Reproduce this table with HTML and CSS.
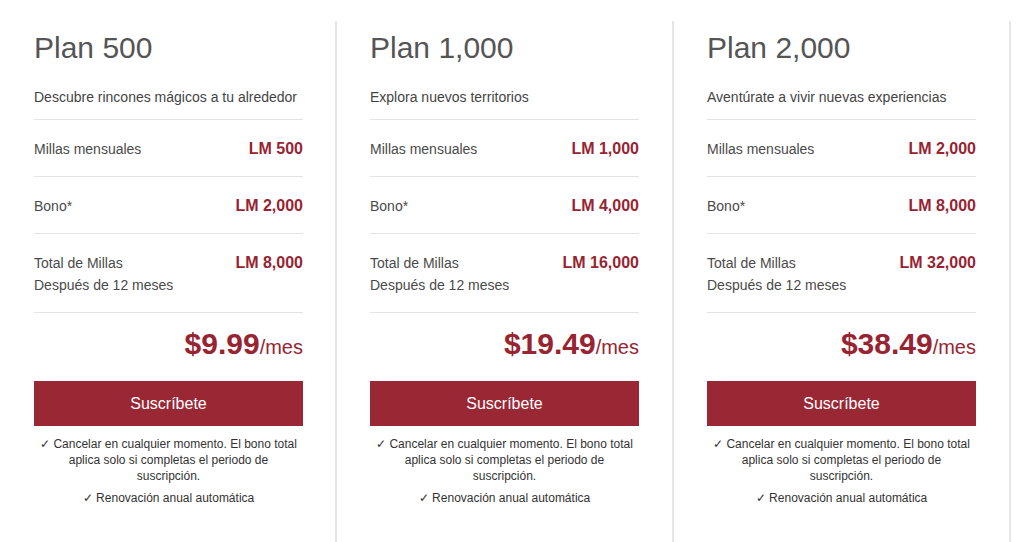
FILE: index.html
```html
<!DOCTYPE html>
<html lang="es">
<head>
<meta charset="utf-8">
<title>Planes</title>
<link rel="stylesheet" href="styles.css">
</head>
<body>
<div class="plans">
  <section class="plan">
    <h2 class="plan-title">Plan 500</h2>
    <p class="plan-desc">Descubre rincones mágicos a tu alrededor</p>
    <div class="row"><span class="label">Millas mensuales</span><span class="value">LM 500</span></div>
    <div class="row"><span class="label">Bono*</span><span class="value">LM 2,000</span></div>
    <div class="row"><span class="label">Total de Millas<br>Después de 12 meses</span><span class="value">LM 8,000</span></div>
    <div class="price"><span class="amount">$9.99</span><span class="per">/mes</span></div>
    <div class="btn">Suscríbete</div>
    <p class="note">✓ Cancelar en cualquier momento. El bono total aplica solo si completas el periodo de suscripción.</p>
    <p class="note">✓ Renovación anual automática</p>
  </section>
  <section class="plan">
    <h2 class="plan-title">Plan 1,000</h2>
    <p class="plan-desc">Explora nuevos territorios</p>
    <div class="row"><span class="label">Millas mensuales</span><span class="value">LM 1,000</span></div>
    <div class="row"><span class="label">Bono*</span><span class="value">LM 4,000</span></div>
    <div class="row"><span class="label">Total de Millas<br>Después de 12 meses</span><span class="value">LM 16,000</span></div>
    <div class="price"><span class="amount">$19.49</span><span class="per">/mes</span></div>
    <div class="btn">Suscríbete</div>
    <p class="note">✓ Cancelar en cualquier momento. El bono total aplica solo si completas el periodo de suscripción.</p>
    <p class="note">✓ Renovación anual automática</p>
  </section>
  <section class="plan">
    <h2 class="plan-title">Plan 2,000</h2>
    <p class="plan-desc">Aventúrate a vivir nuevas experiencias</p>
    <div class="row"><span class="label">Millas mensuales</span><span class="value">LM 2,000</span></div>
    <div class="row"><span class="label">Bono*</span><span class="value">LM 8,000</span></div>
    <div class="row"><span class="label">Total de Millas<br>Después de 12 meses</span><span class="value">LM 32,000</span></div>
    <div class="price"><span class="amount">$38.49</span><span class="per">/mes</span></div>
    <div class="btn">Suscríbete</div>
    <p class="note">✓ Cancelar en cualquier momento. El bono total aplica solo si completas el periodo de suscripción.</p>
    <p class="note">✓ Renovación anual automática</p>
  </section>
</div>
</body>
</html>
```
FILE: styles.css
```css
html, body {
  margin: 0;
  padding: 0;
  background: #fff;
}
body {
  font-family: "Liberation Sans", Arial, sans-serif;
  color: #444;
}
.plans {
  display: flex;
  padding-top: 21px;
}
.plan {
  width: 337px;
  flex: 0 0 337px;
  box-sizing: border-box;
  padding: 0 33px 0 33px;
  border-right: 2px solid #e6e6e6;
  min-height: 521px;
}
.plan:first-child {
  padding-left: 34px;
  padding-right: 32px;
}
.plan-title {
  margin: 0;
  padding-top: 9px;
  font-size: 30px;
  line-height: 36px;
  font-weight: normal;
  color: #555;
}
.plan-desc {
  margin: 20px 0 0;
  padding-bottom: 11px;
  font-size: 14px;
  line-height: 22px;
  color: #444;
  border-bottom: 1px solid #e3e3e3;
}
.row {
  display: flex;
  justify-content: space-between;
  align-items: flex-start;
  padding: 18px 0 16px;
  border-bottom: 1px solid #e3e3e3;
  font-size: 14px;
  line-height: 22px;
}
.label {
  color: #4a4a4a;
}
.value {
  color: #982431;
  font-weight: bold;
  font-size: 16px;
}
.price {
  padding-top: 16px;
  text-align: right;
  font-size: 30px;
  line-height: 30px;
  color: #982431;
}
.amount {
  font-weight: bold;
}
.per {
  font-size: 20px;
}
.btn {
  margin-top: 19px;
  height: 45px;
  line-height: 45px;
  background: #9a2734;
  color: #fff;
  text-align: center;
  font-size: 16px;
}
.note {
  margin: 6px 0 0;
  padding: 0 5px;
  font-size: 12px;
  line-height: 16px;
  text-align: center;
  color: #333;
}
.btn + .note {
  margin-top: 10px;
}
```
